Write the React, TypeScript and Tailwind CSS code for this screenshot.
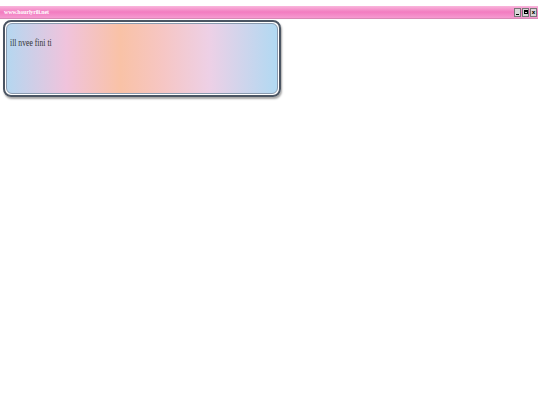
export default function App() {
  return (
    <div className="w-[540px] h-[405px] bg-white relative overflow-hidden">
      {/* Title bar */}
      <div className="mt-[6px] h-[13px] w-[538px] flex items-center justify-between bg-[linear-gradient(to_bottom,#f9b6dc,#f27cc0_50%,#f59ad0)] border-b border-[#d889b6]">
        <span className="pl-[4px] text-[6px] font-bold text-white leading-none tracking-[-0.2px]" style={{ fontFamily: '"Liberation Serif", serif' }}>
          www.hourlyrili.net
        </span>
        <div className="flex gap-[1px] pr-[1px]">
          <div className="w-[7px] h-[9px] bg-[#d8d8d8] border border-[#777] flex items-end justify-center">
            <div className="w-[3px] h-[1px] bg-black mb-[1px]" />
          </div>
          <div className="w-[7px] h-[9px] bg-[#d8d8d8] border border-[#777] flex items-center justify-center">
            <div className="w-[4px] h-[4px] border border-black border-t-2" />
          </div>
          <div className="w-[7px] h-[9px] bg-[#d8d8d8] border border-[#777] flex items-center justify-center text-[6px] leading-none text-black font-bold">
            x
          </div>
        </div>
      </div>

      {/* Lyric panel */}
      <div className="ml-[3px] mt-[1px] w-[278px] h-[77px] rounded-[8px] border-2 border-[#4b5563] p-[1px] shadow-[1px_2px_2px_rgba(0,0,0,0.35)]">
        <div className="w-full h-full rounded-[6px] border border-[#8a9bb0] bg-[linear-gradient(to_right,#b5d7f0,#f0c3dc_22%,#f9c2a6_42%,#f6c6c4_58%,#edd0e6_75%,#b1d9f2)] px-[3px] pt-[13px] leading-none">
          <span className="block w-max origin-left scale-x-70 text-[11px] leading-none text-[#333]" style={{ fontFamily: '"Liberation Serif", serif' }}>
            ill nvee fini ti
          </span>
        </div>
      </div>
    </div>
  )
}
